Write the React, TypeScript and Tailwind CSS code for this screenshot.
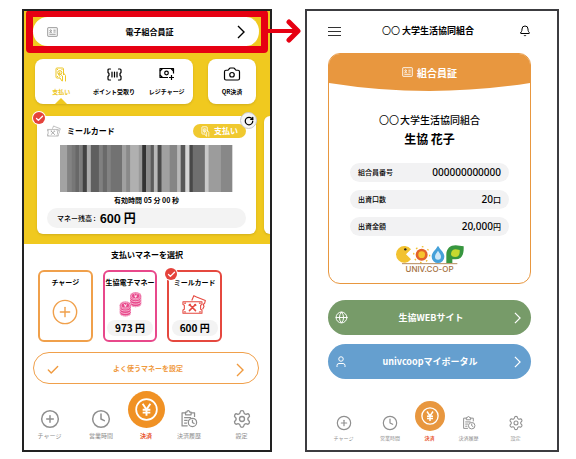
import React from 'react';
import { Bell, Camera, Check, CirclePlus, Clock, Globe, RotateCw, Settings } from 'lucide-react';

type IconProps = { className?: string };

const bars: [number, string][] = [
  [21, '#a3a3a3'], [14, '#838383'], [10, '#777777'], [13, '#686868'], [10, '#7c7c7c'], [12, '#434343'],
  [12, '#adadad'], [24, '#5f5f5f'], [11, '#808080'], [13, '#6a6a6a'], [11, '#828282'], [35, '#727272'],
  [11, '#a0a0a0'], [13, '#898989'], [25, '#b0b0b0'], [10, '#9a9a9a'], [12, '#333333'], [13, '#8c8c8c'],
  [10, '#5c5c5c'], [11, '#b8b8b8'], [12, '#4a4a4a'], [24, '#a0a0a0'], [23, '#858585'], [10, '#b8b8b8'],
  [14, '#585858'], [12, '#d6d6d6'], [10, '#484848'], [36, '#6f6f6f'], [11, '#c9c9c9'], [37, '#9c9c9c'],
  [33, '#888888'],
];

function Barcode() {
  let x = 0;
  return (
    <svg viewBox="0 0 516 141" preserveAspectRatio="none" className="block h-[47px] w-full">
      {bars.map(([w, fill], i) => {
        const bar = <rect key={i} x={x} width={w + 1} height="141" fill={fill} />;
        x += w;
        return bar;
      })}
    </svg>
  );
}

function Chevron({ className }: IconProps) {
  return (
    <svg viewBox="0 0 8 14" fill="none" stroke="currentColor" strokeWidth="1.400" className={className}>
      <path d="M1 1l6 6-6 6" />
    </svg>
  );
}

function MenuIcon() {
  return (
    <svg viewBox="0 0 13 11" stroke="#333" className="block h-[11px] w-[13px]">
      <path d="M0 1.500h13M0 5.500h13M0 9.500h13" />
    </svg>
  );
}

function PersonIcon({ className }: IconProps) {
  return (
    <svg viewBox="0 0 20 22" fill="none" stroke="currentColor" strokeWidth="2" className={className}>
      <circle cx="10" cy="6" r="4.500" />
      <path d="M2 22v-3a4 4 0 0 1 4-4h8a4 4 0 0 1 4 4v3" />
    </svg>
  );
}

function IdCardIcon({ className }: IconProps) {
  return (
    <svg viewBox="0 0 24 22" fill="none" stroke="currentColor" strokeWidth="2" className={className}>
      <rect x="1.5" y="1.5" width="21" height="19" rx="1" />
      <circle cx="8" cy="8" r="1.8" />
      <path d="M5 13c1-2 5-2 6 0M14 7h5M14 11h5M5 16h14" />
    </svg>
  );
}

function PayIcon({ className }: IconProps) {
  return (
    <svg viewBox="0 0 24 30" fill="none" stroke="currentColor" strokeWidth="2" strokeLinejoin="round" className={className}>
      <path d="M10 22H4a2 2 0 0 1-2-2V4a2 2 0 0 1 2-2h11a2 2 0 0 1 2 2v12" />
      <circle cx="9.500" cy="11" r="4" />
      <path d="M9.500 9v4M4 5h2M13 5h2M4 19h2" />
      <path d="M10 19l-3-4c-1-2 1-3 3-1l5 4v9M17 12l4 5v11M10 22l4 6" strokeLinecap="round" />
    </svg>
  );
}

function ScanIcon({ className }: IconProps) {
  return (
    <svg viewBox="0 0 30 26" fill="none" stroke="currentColor" strokeWidth="2.400" strokeLinecap="round" strokeLinejoin="round" className={className}>
      <path d="M7 2H4a2 2 0 0 0-2 2v5l2 2v4l-2 2v5a2 2 0 0 0 2 2h3M23 2h3a2 2 0 0 1 2 2v5l-2 2v4l2 2v5a2 2 0 0 1-2 2h-3" />
      <path d="M10 8v10M15 8v10M20 8v10" />
    </svg>
  );
}

function CashPlusIcon({ className }: IconProps) {
  return (
    <svg viewBox="0 0 32 26" fill="none" stroke="currentColor" strokeWidth="2.400" strokeLinejoin="round" className={className}>
      <path d="M18 20H2V2h27v10" />
      <circle cx="15" cy="11" r="3.600" />
      <path d="M2 7l5-5M24 2l5 5M2 15l5 5M25 15v10M20 20h10" />
    </svg>
  );
}

function MealTicketIcon({ className }: IconProps) {
  return (
    <svg viewBox="0 0 36 28" fill="none" stroke="currentColor" strokeWidth="1.600" strokeLinejoin="round" className={className}>
      <path d="M14 8l3-7 4 2 13 5-1 4-2 2 1 3-2 4" />
      <path d="M1 10h28v4l-2 1v6l2 1v5H1v-5l2-1v-6l-2-1z" />
      <path d="M10.500 14l9 9M19.500 14l-9 9" strokeWidth="2.200" strokeLinecap="round" />
      <path d="M9.500 16l3-3M18 13.500l2.500 2.500" strokeWidth="1.800" />
      <path d="M3.500 24v1h2M24.500 25h2v-1M3.500 13v-1h2M24.500 12h2v1" />
    </svg>
  );
}

function CoinStack({ x, y }: { x: number; y: number }) {
  return (
    <g transform={`translate(${x} ${y})`}>
      <path d="M0 7v17c0 4 5 7 11.500 7S23 28 23 24V7z" fill="#e8488b" />
      <path d="M0 13c0 9 23 9 23 0M0 18c0 9 23 9 23 0M0 23c0 9 23 9 23 0" fill="none" stroke="#fff" strokeWidth="1.200" />
      <ellipse cx="11.500" cy="8" rx="11.500" ry="8" fill="#e8488b" stroke="#fff" />
      <ellipse cx="11.500" cy="8" rx="8.500" ry="5.600" fill="none" stroke="#fff" strokeWidth="1" />
      <path d="M8 5l3.500 3L15 5M11.500 8v4M9 9h5" fill="none" stroke="#fff" strokeWidth="1.500" />
    </g>
  );
}

function CoinsIcon({ className }: IconProps) {
  return (
    <svg viewBox="0 0 46 51" className={className}>
      <CoinStack x={22} y={0} />
      <CoinStack x={1} y={19} />
    </svg>
  );
}

function HistoryIcon({ className }: IconProps) {
  return (
    <svg viewBox="0 0 24 26" fill="none" stroke="currentColor" strokeWidth="1.800" strokeLinejoin="round" className={className}>
      <path d="M10 23H2V4h5M15 4h5v6M7 7h8V3h-2a2 2 0 0 0-4 0H7z" />
      <path d="M5 11h10M5 15h5M5 19h4" />
      <circle cx="17" cy="18" r="6" />
      <path d="M17 14v4l3 2" />
    </svg>
  );
}

function YenIcon({ className }: IconProps) {
  return (
    <svg viewBox="0 0 24 24" fill="none" stroke="#fff" className={className}>
      <circle cx="12" cy="12" r="10.800" strokeWidth="1.800" />
      <path d="M8 6l4 6 4-6M12 12v6.500M8 12.300h8M8 15.300h8" strokeWidth="2" />
    </svg>
  );
}

function CoopLogo() {
  return (
    <svg viewBox="0 0 204 60" className="block h-5 w-[68px]">
      <path d="M45 13A25 25 0 1 0 45 43L30 28z" fill="#f2c230" />
      <circle cx="28" cy="13" r="3.500" fill="#222" />
      <circle cx="77" cy="29" r="24" fill="none" stroke="#f2c230" strokeWidth="4" strokeDasharray="5 13.800" />
      <circle cx="77" cy="29" r="18" fill="#e2632a" />
      <circle cx="77" cy="29" r="10" fill="#f6c32f" />
      <path d="M126 2c8 14 19 20 19 33a19 19 0 0 1-38 0c0-13 11-19 19-33z" fill="#46a1d9" />
      <path d="M126 17c4 8 9 11 9 18a9 9 0 0 1-18 0c0-7 5-10 9-18z" fill="#cfe8f7" />
      <path d="M151 54V28c0-17 12-27 28-27 8 0 16 2 24 3 1 24-5 39-24 39h-10v11z" fill="#37963f" />
      <path d="M165 27c0-9 6-14 14-14l12 2c1 14-3 21-13 21-8 0-13-3-13-9z" fill="#c6d92f" />
      <path d="M18 56h166" stroke="#b58a5c" strokeWidth="3" />
    </svg>
  );
}

function CheckBadge({ className }: IconProps) {
  return (
    <span className={`absolute flex size-3 items-center justify-center rounded-full bg-[#e5423b] text-white ring-1 ring-white ${className}`}>
      <Check className="size-[9px]" strokeWidth={3.5} />
    </span>
  );
}

function PayTab({ icon, label, active }: { icon: React.ReactNode; label: string; active?: boolean }) {
  return (
    <button className={`flex flex-1 flex-col items-center whitespace-nowrap pt-[6px] text-[6px] leading-[10px] font-bold ${active ? 'text-[#edc727]' : 'text-black'}`}>
      <span className="flex h-[18px] items-center">{icon}</span>
      <span className="mt-1">{label}</span>
      {active && (
        <svg viewBox="0 0 12 6" className="mt-auto h-[6px] w-3" fill="#f0c91f">
          <path d="M0 6l6-6 6 6z" />
        </svg>
      )}
    </button>
  );
}

function MoneyCard({ title, color, amount, checked, children }: { title: string; color: string; amount?: string; checked?: boolean; children: React.ReactNode }) {
  return (
    <button className={`relative flex h-[72px] min-w-0 flex-1 flex-col items-center rounded-md border-2 bg-white ${color}`}>
      {checked && <CheckBadge className="-top-1 -left-1" />}
      <span className="h-4 pt-1 text-[7px] leading-3 font-bold whitespace-nowrap text-black">{title}</span>
      <span className="flex flex-1 items-center">{children}</span>
      {amount && (
        <span className="mb-1 w-[46px] rounded-full bg-[#f3f3f3] text-[10px] leading-4 font-bold text-black">{amount}</span>
      )}
    </button>
  );
}

function BottomNav({ small }: { small?: boolean }) {
  const icon = small ? 'size-4' : 'size-5';
  const items = [
    { label: 'チャージ', icon: <CirclePlus className={icon} strokeWidth={1.8} /> },
    { label: '営業時間', icon: <Clock className={icon} strokeWidth={1.8} /> },
    { label: '決済', icon: null },
    { label: '決済履歴', icon: <HistoryIcon className={small ? 'size-[14px]' : 'size-[18px]'} /> },
    { label: '設定', icon: <Settings className={icon} strokeWidth={1.6} /> },
  ];
  return (
    <nav className={`mt-auto grid ${small ? 'grid-cols-[45fr_48fr_31fr_47fr_47fr] pr-[18px] pb-2 pl-[14px] text-[5px] leading-[8px]' : 'grid-cols-[51fr_52fr_38fr_48fr_57fr] pb-[9px] text-[6px] leading-[10px]'}`}>
      {items.map((item) =>
        item.icon ? (
          <a key={item.label} href="#" className="flex flex-col items-center justify-end text-[#8f8f8f]">
            <span className={`flex items-center ${small ? 'h-4' : 'h-5'}`}>{item.icon}</span>
            <span className={small ? 'mt-[3px]' : 'mt-[2px]'}>{item.label}</span>
          </a>
        ) : (
          <a key={item.label} href="#" className="flex flex-col items-center gap-[3px] font-bold text-[#e8542c]">
            <span className={`flex items-center justify-center rounded-full ${small ? 'size-[30px] bg-[#e8973f]' : 'size-[37px] bg-[#f09124]'}`}>
              <YenIcon className={small ? 'size-[18px]' : 'size-[23px]'} />
            </span>
            <span>{item.label}</span>
          </a>
        )
      )}
    </nav>
  );
}

function PaymentScreen() {
  return (
    <section className="relative flex flex-col border-2 border-[#222] bg-white">
      <div className="overflow-hidden bg-[#f0c91f] pb-[10px]">
        {/* Highlighted membership button */}
        <div className="mx-[2px] -mt-px rounded-sm border-7 border-[#e60012]">
          <button className="flex h-[29px] w-full items-center justify-between rounded-full border-r-2 border-[#f0c91f] bg-white pr-[14px] pl-[14px]">
            <IdCardIcon className="h-[10px] w-[11px] text-[#8c8c8c]" />
            <span className="pl-1 text-[8px] font-bold">電子組合員証</span>
            <Chevron className="h-[14px] w-2" />
          </button>
        </div>

        <div className="mt-[6px] mr-[14px] ml-[11px] flex h-[45px] gap-[15px]">
          <div className="flex flex-[158] rounded-lg bg-white shadow-sm">
            <PayTab active label="支払い" icon={<PayIcon className="h-[15px] w-3" />} />
            <PayTab label="ポイント受取り" icon={<ScanIcon className="h-[13px] w-[15px]" />} />
            <PayTab label="レジチャージ" icon={<CashPlusIcon className="h-[14px] w-4" />} />
          </div>
          <div className="flex flex-[48] rounded-lg bg-white shadow-sm">
            <PayTab label="QR決済" icon={<Camera className="size-[18px]" strokeWidth={1.6} />} />
          </div>
        </div>

        <div className="mt-3 ml-[13px] flex gap-2">
          <div className="relative min-w-0 flex-1 rounded-md bg-white px-[10px] pt-2 pb-[6px] shadow-sm">
            <CheckBadge className="-top-1 -left-1" />
            <button aria-label="更新" className="absolute -top-1 -right-px flex size-[17px] items-center justify-center rounded-full border border-[#c9c9c9] bg-[#f5f5f5]">
              <RotateCw className="size-[10px]" strokeWidth={3} />
            </button>
            <div className="flex h-[14px] items-center">
              <MealTicketIcon className="h-3 w-[14px] text-[#999]" />
              <h2 className="ml-[6px] text-[8px] font-bold">ミールカード</h2>
              <button className="ml-auto flex h-[14px] w-[53px] items-center justify-center gap-1 rounded-full bg-[#f0c92f] text-[8px] font-bold text-white">
                <PayIcon className="h-[11px] w-[9px]" />
                支払い
              </button>
            </div>
            <div className="mt-[7px] px-[13px]">
              <Barcode />
            </div>
            <p className="mt-[3px] text-center text-[7px] leading-[10px] font-bold">有効時間 05 分 00 秒</p>
            <p className="mt-[3px] flex h-5 items-center gap-1 rounded-full bg-[#f3f3f3] pl-[10px]">
              <span className="text-[7px] font-medium">マネー残高 :</span>
              <span className="text-[12px] font-bold">600 円</span>
            </p>
          </div>
          <div className="w-[6px] rounded-l-md bg-white shadow-sm" />
        </div>
      </div>

      <h2 className="mt-[5px] text-center text-[8px] leading-3 font-bold">支払いマネーを選択</h2>
      <div className="mt-[9px] mr-[48px] ml-[14px] flex gap-[10px]">
        <MoneyCard title="チャージ" color="border-[#f0a04b]">
          <CirclePlus className="mb-1 size-7 text-[#f0a04b]" strokeWidth={1.2} />
        </MoneyCard>
        <MoneyCard title="生協電子マネー" color="border-[#e8488b]" amount="973 円">
          <CoinsIcon className="h-[25px] w-[23px]" />
        </MoneyCard>
        <MoneyCard title="ミールカード" color="border-[#e5483f]" amount="600 円" checked>
          <MealTicketIcon className="h-[19px] w-[25px] text-[#e5483f]" />
        </MoneyCard>
      </div>
      <button className="mt-[10px] mr-[11px] ml-[9px] flex h-8 items-center justify-between rounded-full border border-[#f0a04b] pt-1 pr-[14px] pl-3 text-[#f09a3e]">
        <Check className="size-[14px]" strokeWidth={2.4} />
        <span className="pb-1 text-[7px] font-bold">よく使うマネーを設定</span>
        <Chevron className="h-[14px] w-2" />
      </button>
      <BottomNav />

      {/* Arrow to the next screen */}
      <svg viewBox="0 0 34 24" fill="none" stroke="#e60012" className="absolute top-[8px] -right-[31px] h-6 w-[34px]">
        <path d="M0 12h29" strokeWidth="4" />
        <path d="M22 3l9 9-9 9" strokeWidth="5" strokeLinecap="round" strokeLinejoin="round" />
      </svg>
    </section>
  );
}

const details = [
  { label: '組合員番号', value: '000000000000', unit: '' },
  { label: '出資口数', value: '20', unit: '口' },
  { label: '出資金額', value: '20,000', unit: '円' },
];

function MemberScreen() {
  return (
    <section className="flex flex-col border-2 border-[#3c3c40] bg-white">
      <header className="mr-[26px] ml-[21px] flex h-10 items-center justify-between">
        <button aria-label="メニュー">
          <MenuIcon />
        </button>
        <h1 className="flex items-center gap-[2px] pr-1 text-[9px] font-bold">
          <span className="font-normal">〇〇</span>
          <span>大学生活協同組合</span>
        </h1>
        <button aria-label="お知らせ">
          <Bell className="size-3" strokeWidth={2} />
        </button>
      </header>

      <article className="mt-[2px] mr-[26px] ml-[21px] overflow-hidden rounded-xl border border-[#e8973f]">
        <div className="flex h-[29px] items-center justify-center gap-1 bg-[#e8973f] pt-[7px] text-[10px] font-bold text-white">
          <IdCardIcon className="h-[10px] w-[11px]" />
          <h2>組合員証</h2>
        </div>
        <svg viewBox="0 0 200 8" preserveAspectRatio="none" className="block h-2 w-full" fill="#e8973f">
          <path d="M0 0Q100 16 200 0z" />
        </svg>
        <div className="px-[21px] pt-[21px]">
          <p className="flex items-center justify-center gap-px text-[10px] leading-4">
            <span>〇〇</span>
            <span className="font-medium">大学生活協同組合</span>
          </p>
          <p className="mt-px text-center text-[12px] leading-5 font-bold">生協 花子</p>
          <dl className="mt-[14px] flex flex-col gap-2">
            {details.map((row) => (
              <div key={row.label} className="flex h-[19px] items-center justify-between rounded-full bg-[#f2f2f3] px-2">
                <dt className="text-[7px] font-medium">{row.label}</dt>
                <dd className="text-[8px] font-medium">
                  <span className="font-['Noto_Sans',sans-serif] text-[10px]">{row.value}</span>
                  {row.unit}
                </dd>
              </div>
            ))}
          </dl>
        </div>
        <div className="mt-[9px] mb-[9px] flex flex-col items-center">
          <CoopLogo />
          <span className="font-[Inter,sans-serif] text-[8px] leading-[9px] font-medium text-[#a5713f]">UNIV.CO-OP</span>
        </div>
      </article>

      <div className="mt-4 mr-[26px] ml-[21px] flex flex-col gap-[9px] text-[9px] font-bold text-white">
        <a href="#" className="flex h-[35px] items-center justify-between rounded-full bg-[#779b69] pr-[10px] pl-[7px]">
          <Globe className="size-[13px]" strokeWidth={1.8} />
          <span>生協WEBサイト</span>
          <Chevron className="h-3 w-[7px]" />
        </a>
        <a href="#" className="flex h-[35px] items-center justify-between rounded-full bg-[#659fcf] pr-[10px] pl-2">
          <PersonIcon className="h-[11px] w-[10px]" />
          <span>univcoopマイポータル</span>
          <Chevron className="h-3 w-[7px]" />
        </a>
      </div>
      <BottomNav small />
    </section>
  );
}

export default function App() {
  return (
    <main className="bg-white pt-[9px] pr-[17px] pb-[7px] pl-[22px] font-['Noto_Sans_CJK_JP','Noto_Sans',sans-serif] text-black" lang="ja">
      <div className="grid min-h-[443px] grid-cols-[250fr_254fr] gap-[33px]">
        <PaymentScreen />
        <MemberScreen />
      </div>
    </main>
  );
}
